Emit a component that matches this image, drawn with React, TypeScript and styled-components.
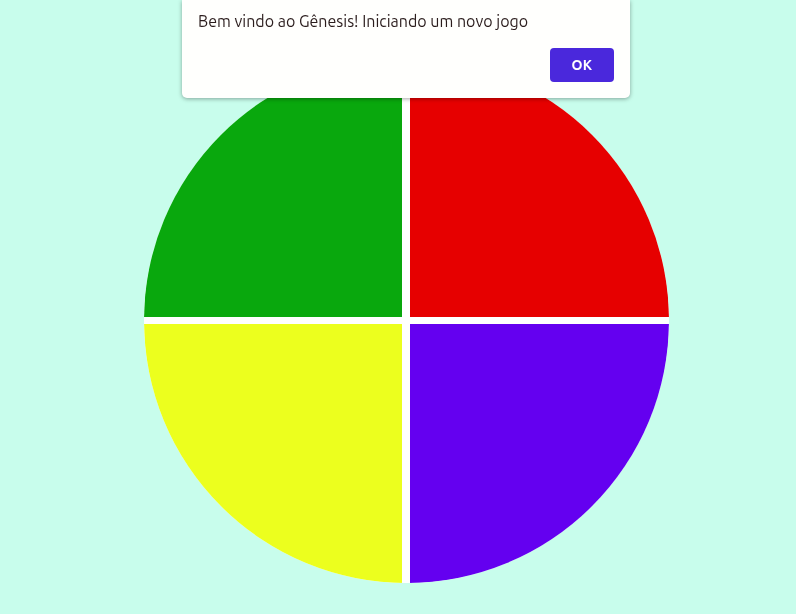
import React from "react";
import styled, { createGlobalStyle } from "styled-components";

const Global = createGlobalStyle`
  html, body { margin: 0; padding: 0; background: #c8fdec; }
  body { font-family: "Ubuntu", "Noto Sans", "DejaVu Sans", sans-serif; }
`;

const Page = styled.main`
  min-height: 614px;
  box-sizing: border-box;
  padding: 58px 0 0 144px;
`;

const Board = styled.div`
  width: 525px;
  height: 525px;
  display: grid;
  grid-template-columns: 258px 259px;
  grid-template-rows: 259px 259px;
  column-gap: 8px;
  row-gap: 7px;
  background: #ffffff;
  border-radius: 50%;
  overflow: hidden;
`;

type Corner = "tl" | "tr" | "bl" | "br";

const radii: Record<Corner, string> = {
  tl: "100% 0 0 0",
  tr: "0 100% 0 0",
  bl: "0 0 0 100%",
  br: "0 0 100% 0",
};

const Pad = styled.div<{ $color: string; $corner: Corner }>`
  background: ${(p) => p.$color};
  border-radius: ${(p) => radii[p.$corner]};
`;

const Dialog = styled.div`
  position: fixed;
  top: 0;
  left: 182px;
  width: 448px;
  height: 98px;
  box-sizing: border-box;
  background: #fffffd;
  border-radius: 0 0 5px 5px;
  box-shadow: 0 1px 4px rgba(0, 0, 0, 0.35);
  padding: 10px 16px 16px 16px;
  display: flex;
  flex-direction: column;
  justify-content: space-between;
`;

const Message = styled.p`
  margin: 0;
  font-family: "Ubuntu", "Noto Sans", "DejaVu Sans", sans-serif;
  font-size: 16px;
  line-height: 22px;
  color: #2b1d1d;
`;

const Actions = styled.div`
  display: flex;
  justify-content: flex-end;
`;

const OkButton = styled.button`
  width: 64px;
  height: 34px;
  border: none;
  border-radius: 4px;
  background: #4a28dc;
  color: #ffffff;
  font-family: "Ubuntu", "Noto Sans", "DejaVu Sans", sans-serif;
  font-weight: 700;
  font-size: 14px;
  letter-spacing: 0.3px;
  cursor: pointer;
`;

export default function App() {
  return (
    <>
      <Global />
      <Page>
        <Board>
          <Pad $color="#09a80d" $corner="tl" />
          <Pad $color="#e60000" $corner="tr" />
          <Pad $color="#ecff1e" $corner="bl" />
          <Pad $color="#6400f0" $corner="br" />
        </Board>
      </Page>
      <Dialog role="alertdialog">
        <Message>Bem vindo ao Gênesis! Iniciando um novo jogo</Message>
        <Actions>
          <OkButton>OK</OkButton>
        </Actions>
      </Dialog>
    </>
  );
}
